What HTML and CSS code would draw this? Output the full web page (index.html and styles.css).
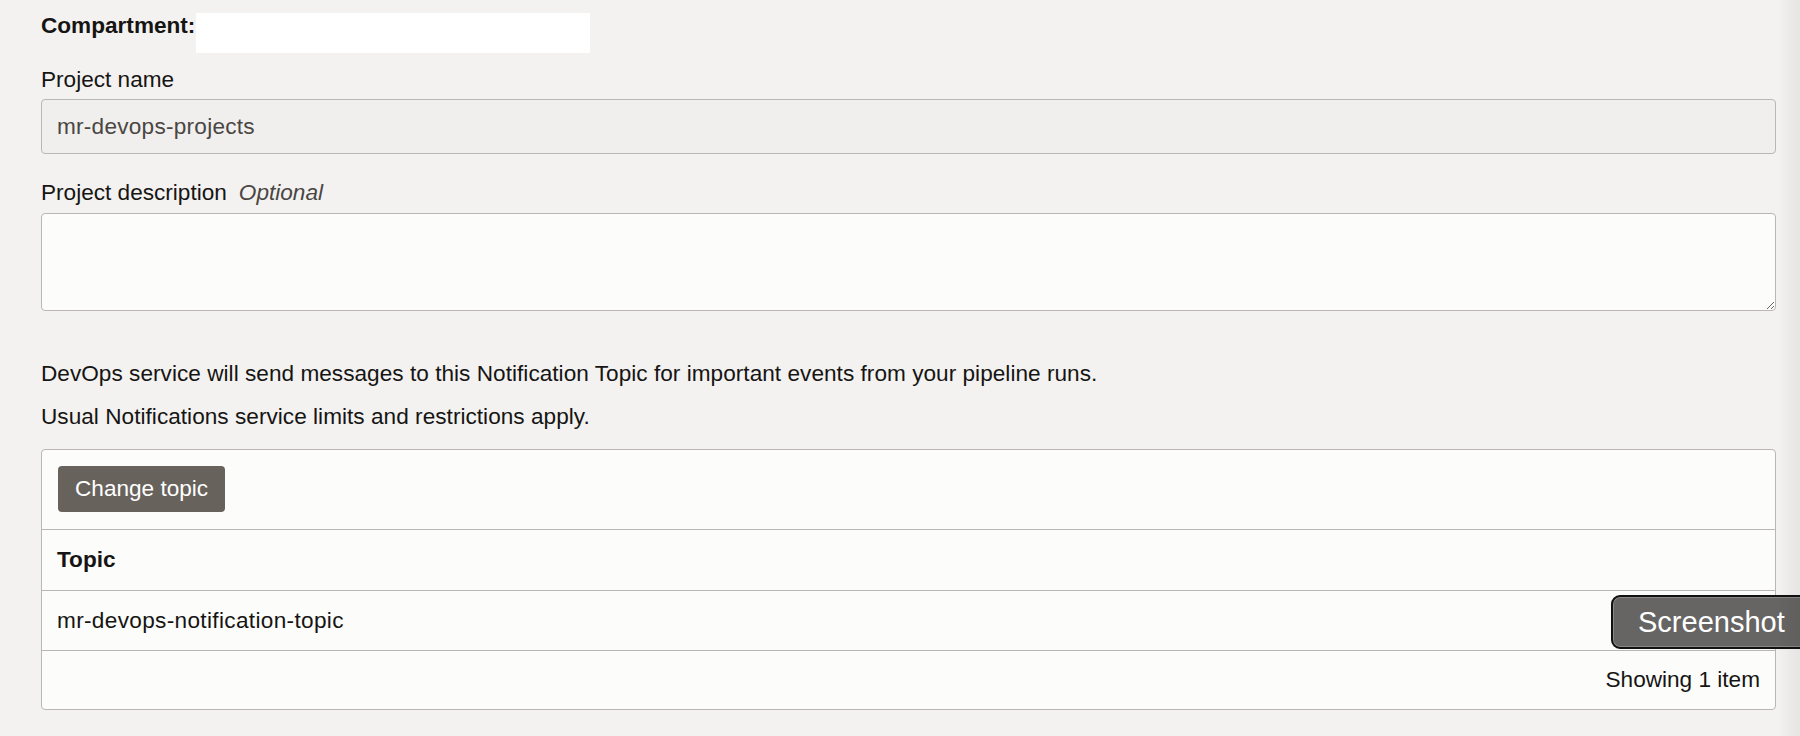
FILE: index.html
```html
<!DOCTYPE html>
<html lang="en">
<head>
<meta charset="utf-8">
<title>Project details</title>
<link rel="stylesheet" href="styles.css">
</head>
<body>
<main class="page">
  <div class="compartment-row">
    <span class="compartment-label">Compartment:</span>
    <span class="compartment-value"></span>
  </div>

  <label class="field-label" for="pname">Project name</label>
  <input class="text-input" id="pname" type="text" value="mr-devops-projects" readonly>

  <label class="field-label field-label--desc" for="pdesc">Project description<span class="optional">Optional</span></label>
  <textarea class="text-area" id="pdesc"></textarea>

  <p class="note note--first">DevOps service will send messages to this Notification Topic for important events from your pipeline runs.</p>
  <p class="note">Usual Notifications service limits and restrictions apply.</p>

  <section class="card">
    <div class="card-toolbar">
      <button class="btn" type="button">Change topic</button>
    </div>
    <div class="table-row table-head">Topic</div>
    <div class="table-row table-value">mr-devops-notification-topic</div>
    <div class="table-row table-foot">Showing 1 item</div>
  </section>
</main>
<div class="shot-tip">Screenshot</div>
</body>
</html>
```
FILE: styles.css
```css
html, body {
  margin: 0;
  padding: 0;
}
body {
  width: 1800px;
  height: 736px;
  overflow: hidden;
  background: #f3f2f1;
  color: #161513;
  font-family: "Liberation Sans", Arial, Helvetica, sans-serif;
  font-size: 22.6px;
  position: relative;
}
body::after {
  content: "";
  position: fixed;
  top: 0;
  right: 0;
  width: 22px;
  height: 100%;
  background: linear-gradient(to right, rgba(0,0,0,0) 0%, rgba(0,0,0,0.035) 60%, rgba(0,0,0,0.05) 100%);
  pointer-events: none;
}
.page {
  display: flex;
  flex-direction: column;
  padding: 14px 24px 0 41px;
}
.compartment-row {
  display: flex;
  align-items: flex-start;
}
.compartment-label {
  font-weight: bold;
  line-height: 28px;
  margin-top: -2px;
}
.compartment-value {
  display: block;
  width: 394px;
  height: 40px;
  background: #ffffff;
  margin-left: 1px;
  margin-top: -1px;
}
.field-label {
  display: block;
  line-height: 28px;
  margin-top: 13px;
  margin-bottom: 5px;
}
.field-label--desc {
  margin-top: 25px;
  margin-bottom: 6px;
}
.optional {
  font-style: italic;
  color: #4a4643;
  margin-left: 12px;
}
.text-input {
  box-sizing: border-box;
  width: 100%;
  height: 55px;
  margin: 0;
  border: 1px solid #bab6b1;
  border-radius: 4px;
  background: #f0efed;
  color: #4a4643;
  font: inherit;
  letter-spacing: 0.25px;
  padding: 0 15px;
  outline: none;
}
.text-area {
  box-sizing: border-box;
  display: block;
  width: 100%;
  height: 98px;
  margin: 0;
  border: 1px solid #bab6b1;
  border-radius: 4px;
  background: #fcfcfb;
  font: inherit;
  padding: 10px 15px;
  outline: none;
}
.note {
  margin: 15px 0 0;
  line-height: 28px;
  letter-spacing: 0.03px;
}
.note--first {
  margin-top: 49px;
}
.card {
  margin-top: 18px;
  border: 1px solid #bab6b1;
  border-radius: 4px;
  background: #fcfcfb;
}
.card-toolbar {
  padding: 16px 16px 17px 16px;
  display: flex;
}
.btn {
  height: 46px;
  padding: 0 17px;
  border: none;
  border-radius: 4px;
  background: #68625d;
  color: #ffffff;
  font: inherit;
  cursor: pointer;
}
.table-row {
  box-sizing: border-box;
  height: 60px;
  border-top: 1px solid #bab6b1;
  padding: 0 15px;
  display: flex;
  align-items: center;
}
.table-head {
  height: 61px;
  font-weight: bold;
}
.table-value {
  letter-spacing: 0.33px;
}
.table-foot {
  justify-content: flex-end;
  height: 59px;
}
.shot-tip {
  position: absolute;
  left: 1611px;
  top: 595px;
  width: 230px;
  height: 54px;
  box-sizing: border-box;
  padding-left: 25px;
  display: flex;
  align-items: center;
  background: #666564;
  border: 2px solid #111;
  border-radius: 9px;
  box-shadow: inset 0 0 0 1px #8a8988;
  color: #ffffff;
  font-family: "Liberation Sans", Arial, sans-serif;
  font-size: 29px;
}
```
